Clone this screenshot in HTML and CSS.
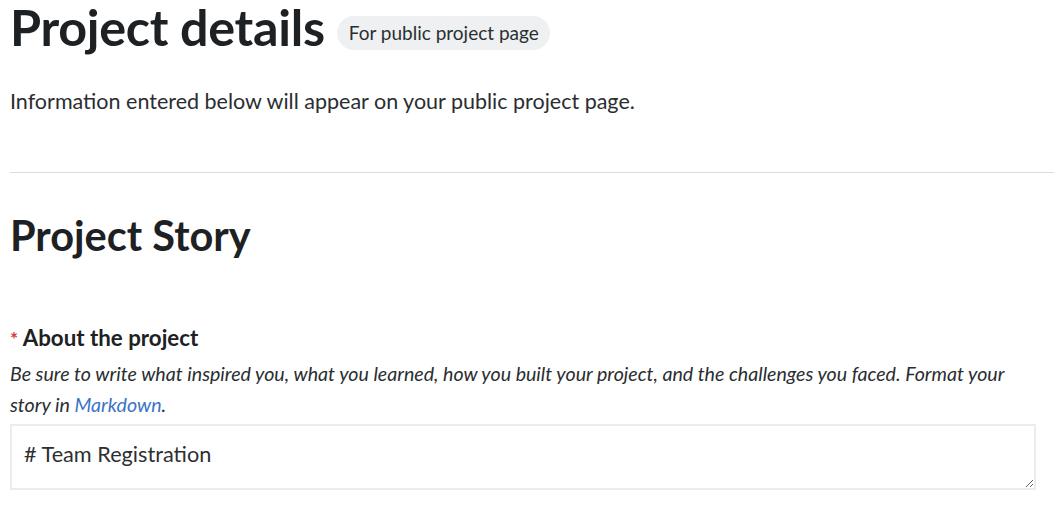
FILE: index.html
```html
<!DOCTYPE html>
<html>
<head>
<meta charset="utf-8">
<link rel="stylesheet" href="styles.css">
</head>
<body>
<main class="page">
  <header class="head">
    <h1 class="title">Project details</h1>
    <span class="badge">For public project page</span>
  </header>
  <p class="intro">Information entered below will appear on your public project page.</p>
  <hr class="divider">
  <h2 class="section-title">Project Story</h2>
  <div class="field">
    <label class="label"><span class="req">*</span> About the project</label>
    <p class="hint">Be sure to write what inspired you, what you learned, how you built your project, and the challenges you faced. Format your story in <a class="link" href="#">Markdown</a>.</p>
    <textarea class="textarea"># Team Registration</textarea>
  </div>
</main>
</body>
</html>
```
FILE: styles.css
```css
* { box-sizing: border-box; }
html, body { margin: 0; padding: 0; background: #fff; }
body {
  font-family: "Lato", "Noto Sans", sans-serif;
  color: #222629;
}
.page {
  padding: 0 0 0 10px;
  overflow: hidden;
}
.head {
  display: flex;
  align-items: flex-start;
  gap: 12px;
}
.title {
  margin: 0;
  font-size: 50.3px;
  font-weight: 700;
  letter-spacing: -0.3px;
  line-height: 53px;
  color: #1d2124;
}
.badge {
  display: inline-block;
  background: #eef0f1;
  border-radius: 17px;
  padding: 0 11px 0 12px;
  height: 34px;
  line-height: 34px;
  font-size: 19px;
  color: #2a2f33;
  margin-top: 16px;
}
.intro {
  margin: 35px 0 0;
  font-size: 21.5px;
  line-height: 26px;
  color: #2a2e31;
}
.divider {
  margin: 58px 0 0;
  border: 0;
  border-top: 1px solid #dcdcdc;
  height: 0;
}
.section-title {
  margin: 37px 0 0;
  font-size: 41.5px;
  line-height: 50px;
  font-weight: 700;
  color: #1d2124;
}
.field {
  margin-top: 64px;
  padding-right: 18px;
}
.label {
  display: block;
  font-size: 22.3px;
  font-weight: 700;
  line-height: 28px;
  color: #1d2124;
}
.req {
  color: #d23a3a;
  font-size: 19px;
}
.hint {
  margin: 5px 0 0;
  font-size: 19.6px;
  font-style: italic;
  line-height: 31px;
  color: #2a2e31;
}
.link { color: #3b74c6; text-decoration: none; }
.textarea {
  display: block;
  width: 100%;
  margin-top: 4px;
  height: 66px;
  border: 2px solid #ececec;
  border-radius: 0;
  padding: 15px 12px;
  font-family: "Lato", "Noto Sans", sans-serif;
  font-size: 21.7px;
  color: #2c2f31;
  resize: vertical;
  outline: none;
}
```
